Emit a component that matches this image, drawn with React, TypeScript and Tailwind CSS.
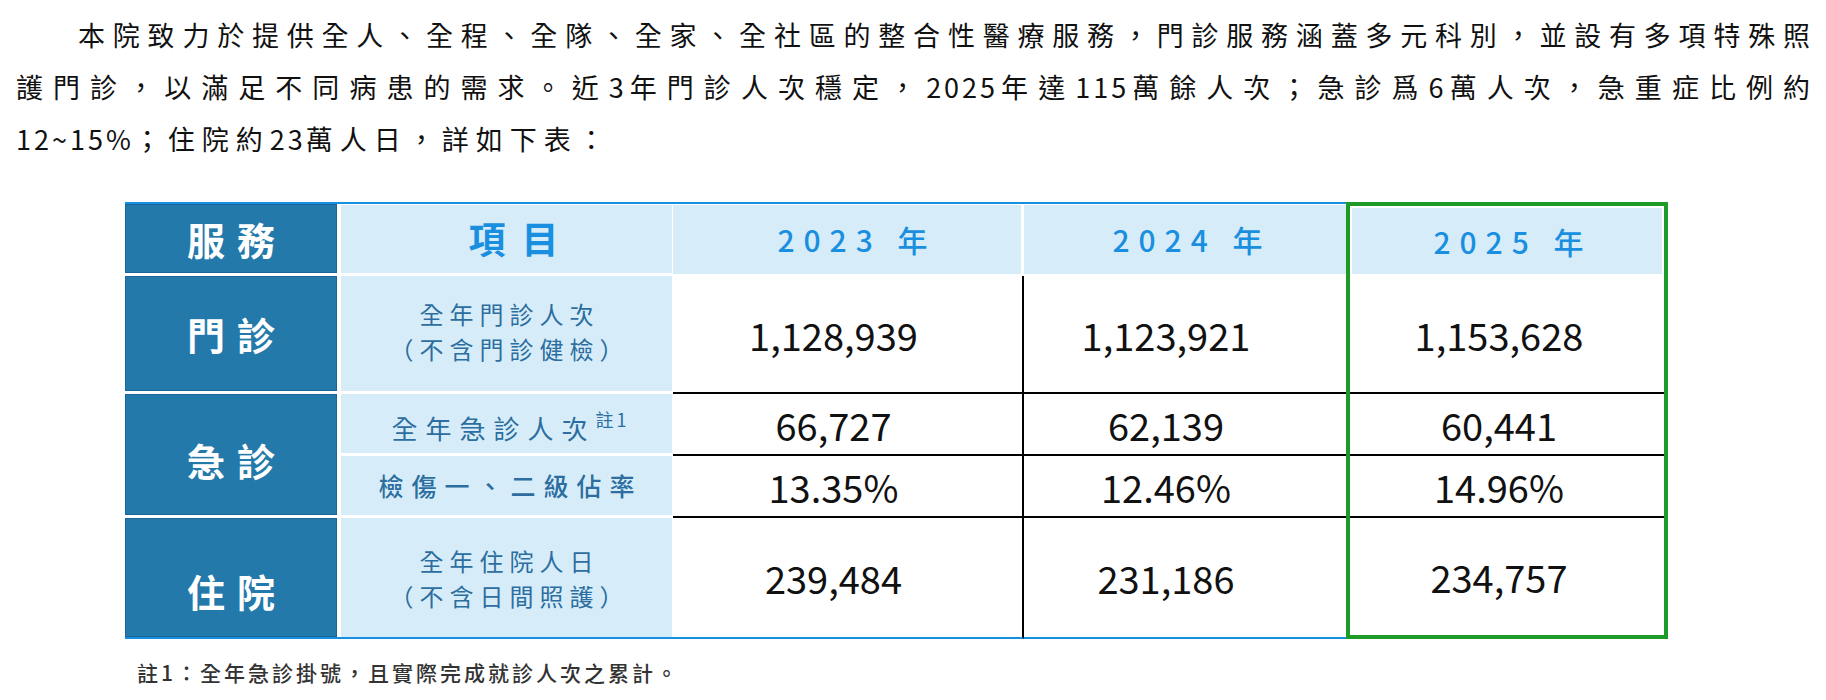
import React from "react";

const LIGHT_TEXT = "text-[24px] tracking-[6px] text-[#2d6d9f] leading-[35px]";
const NUM = "flex items-center justify-center text-[38px] text-[#111]";

// latin runs inside the paragraph are set tighter than the CJK glyphs
const Lat: React.FC<{ children: React.ReactNode }> = ({ children }) => (
  <span className="tracking-[3px]">{children}</span>
);

const DarkCell: React.FC<{ label: string; className?: string; inner?: string }> = ({
  label,
  className = "",
  inner = "",
}) => (
  <div className={`pr-[4px] ${className}`}>
    <div
      className={`flex h-full items-center justify-center border border-[#1b6598] bg-[#2379aa] pl-[12px] text-[38px] font-bold tracking-[12px] text-white ${inner}`}
    >
      {label}
    </div>
  </div>
);

export default function App() {
  return (
    <div className="h-[700px] w-[1826px] bg-white font-['Noto_Sans_CJK_TC',sans-serif] text-[#111]">
      {/* Intro paragraph */}
      <div className="pl-[16px] pr-[9px] pt-[9px] text-[27px] leading-[52px] tracking-[7px]">
        <p className="pl-[62px] text-justify [text-align-last:justify]">
          本院致力於提供全人、全程、全隊、全家、全社區的整合性醫療服務，門診服務涵蓋多元科別，並設有多項特殊照
        </p>
        <p className="text-justify [text-align-last:justify]">
          護門診，以滿足不同病患的需求。近<Lat>3</Lat>年門診人次穩定，<Lat>2025</Lat>年達<Lat>115</Lat>萬餘人次；急診爲<Lat>6</Lat>萬人次，急重症比例約
        </p>
        <p>
          <Lat>12~15%</Lat>；住院約<Lat>23</Lat>萬人日，詳如下表：
        </p>
      </div>

      {/* Table */}
      <div className="ml-[125px] mt-[37px] grid w-[1543px] grid-cols-[216px_332px_351px_322px_322px] grid-rows-[74px_118px_62px_62px_121px]">
        {/* column 1 */}
        <DarkCell label="服務" className="col-start-1 row-start-1 border-t-2 border-[#1690e3] pb-[3px]" />
        <DarkCell label="門診" className="col-start-1 row-start-2 pb-[3px]" />
        <DarkCell label="急診" className="col-start-1 row-start-3 row-span-2 pb-[3px]" inner="pt-[10px]" />
        <DarkCell label="住院" className="col-start-1 row-start-5 border-b-2 border-[#1690e3]" inner="pt-[26px]" />

        {/* column 2 */}
        <div className="col-start-2 row-start-1 border-t-2 border-[#1690e3] pb-[3px] pr-[1px] pt-[1px]">
          <div className="flex h-full items-center justify-center bg-[#d6edf9] pl-[30px] text-[37px] font-bold tracking-[16px] text-[#1a8fe0]">
            項目
          </div>
        </div>
        <div className="col-start-2 row-start-2 pb-[3px] pr-[1px]">
          <div className={`flex h-full flex-col items-center justify-center bg-[#d6edf9] pb-[6px] pl-[6px] ${LIGHT_TEXT}`}>
            <span>全年門診人次</span>
            <span>（不含門診健檢）</span>
          </div>
        </div>
        <div className="col-start-2 row-start-3 pb-[3px] pr-[1px]">
          <div className="flex h-full items-center justify-center bg-[#d6edf9] pl-[8px] text-[26px] leading-[35px] tracking-[8px] text-[#2d6d9f]">
            <span>
              全年急診人次
              <span className="align-[12px] text-[18px] tracking-[3px]">註1</span>
            </span>
          </div>
        </div>
        <div className="col-start-2 row-start-4 pb-[3px] pr-[1px]">
          <div className="flex h-full items-center justify-center bg-[#d6edf9] pl-[8px] text-[25px] font-medium leading-[35px] tracking-[8px] text-[#2d6d9f]">
            檢傷一、二級佔率
          </div>
        </div>
        <div className="col-start-2 row-start-5 border-b-2 border-[#1690e3] pr-[1px]">
          <div className={`flex h-full flex-col items-center justify-center bg-[#d6edf9] pl-[6px] ${LIGHT_TEXT}`}>
            <span>全年住院人日</span>
            <span>（不含日間照護）</span>
          </div>
        </div>

        {/* 2023 */}
        <div className="col-start-3 row-start-1 border-t-2 border-[#1690e3] pb-[2px] pr-[3px] pt-[1px]">
          <div className="flex h-full items-center justify-center bg-[#d6edf9] pl-[20px] text-[30px] font-medium tracking-[9px] text-[#1a8fe0]">
            2023 年
          </div>
        </div>
        <div className={`col-start-3 row-start-2 border-b-2 border-r-2 border-black pr-[28px] ${NUM}`}>1,128,939</div>
        <div className={`col-start-3 row-start-3 border-b-2 border-r-2 border-black pr-[28px] ${NUM}`}>66,727</div>
        <div className={`col-start-3 row-start-4 border-b-2 border-r-2 border-black pr-[28px] ${NUM}`}>13.35%</div>
        <div className={`col-start-3 row-start-5 border-b-2 border-r-2 border-b-[#1690e3] border-r-black pr-[28px] ${NUM}`}>
          239,484
        </div>

        {/* 2024 */}
        <div className="col-start-4 row-start-1 border-t-2 border-[#1690e3] pb-[2px] pt-[1px]">
          <div className="flex h-full items-center justify-center bg-[#d6edf9] pl-[14px] text-[30px] font-medium tracking-[9px] text-[#1a8fe0]">
            2024 年
          </div>
        </div>
        <div className={`col-start-4 row-start-2 border-b-2 border-black pr-[38px] ${NUM}`}>1,123,921</div>
        <div className={`col-start-4 row-start-3 border-b-2 border-black pr-[38px] ${NUM}`}>62,139</div>
        <div className={`col-start-4 row-start-4 border-b-2 border-black pr-[38px] ${NUM}`}>12.46%</div>
        <div className={`col-start-4 row-start-5 border-b-2 border-[#1690e3] pr-[38px] ${NUM}`}>231,186</div>

        {/* 2025 (highlighted) */}
        <div className="col-start-5 row-start-1 row-span-5 grid grid-rows-[70px_118px_62px_62px_1fr] border-4 border-[#1e9b27]">
          <div className="px-[2px] pb-[2px] pt-[2px]">
            <div className="flex h-full items-center justify-center bg-[#d6edf9] pl-[12px] text-[30px] font-medium tracking-[9px] text-[#1a8fe0]">
              2025 年
            </div>
          </div>
          <div className={`border-b-2 border-black pr-[16px] ${NUM}`}>1,153,628</div>
          <div className={`border-b-2 border-black pr-[16px] ${NUM}`}>60,441</div>
          <div className={`border-b-2 border-black pr-[16px] ${NUM}`}>14.96%</div>
          <div className={`pr-[16px] ${NUM}`}>234,757</div>
        </div>
      </div>

      {/* Footnote */}
      <p className="mt-[19px] pl-[137px] text-[21px] font-medium leading-[28px] tracking-[3px] text-[#333]">
        註1：全年急診掛號，且實際完成就診人次之累計。
      </p>
    </div>
  );
}
